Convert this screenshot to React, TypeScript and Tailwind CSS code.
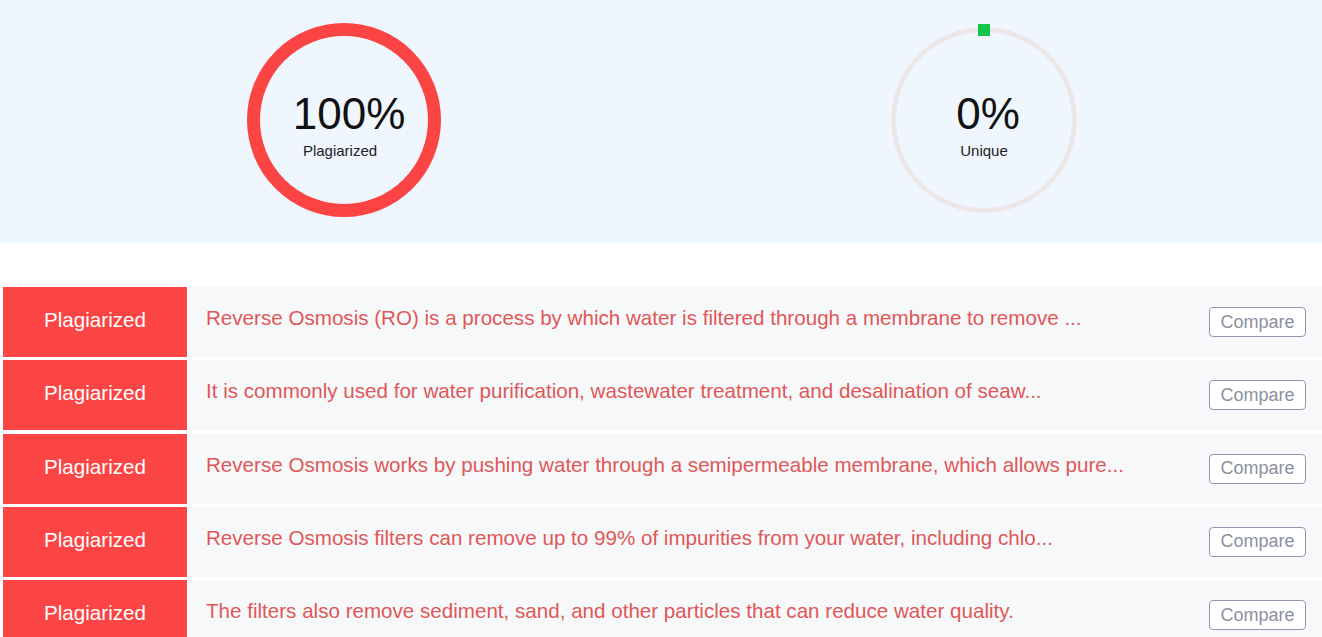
import React from "react";

const rows = [
  "Reverse Osmosis (RO) is a process by which water is filtered through a membrane to remove ...",
  "It is commonly used for water purification, wastewater treatment, and desalination of seaw...",
  "Reverse Osmosis works by pushing water through a semipermeable membrane, which allows pure...",
  "Reverse Osmosis filters can remove up to 99% of impurities from your water, including chlo...",
  "The filters also remove sediment, sand, and other particles that can reduce water quality.",
];

function Ring({ full, value, label }: { full: boolean; value: string; label: string }) {
  return (
    <div className="relative w-[200px] h-[200px]">
      <svg width="200" height="200" viewBox="0 0 200 200" className="absolute inset-0">
        {full ? (
          <circle cx="100" cy="100" r="90.5" fill="none" stroke="#fb4545" strokeWidth="13" />
        ) : (
          <>
            <circle cx="100" cy="100" r="90.5" fill="none" stroke="#ede6e6" strokeWidth="4.5" />
            <rect x="94" y="4" width="12" height="12" fill="#12c54b" />
          </>
        )}
      </svg>
      <div className="absolute inset-0 flex flex-col items-center justify-center pt-[10px]">
        <div className={full ? "text-[44px] leading-[46px] text-[#111] ml-[10px]" : "text-[44px] leading-[46px] text-[#111] ml-[8px]"}>{value}</div>
        <div className={full ? "text-[15px] leading-[18px] text-[#222] mt-[5px] mr-[8px]" : "text-[15px] leading-[18px] text-[#222] mt-[5px]"}>{label}</div>
      </div>
    </div>
  );
}

export default function App() {
  return (
    <div className="w-[1322px] h-[637px] overflow-hidden bg-white" style={{ fontFamily: '"Liberation Sans", Arial, sans-serif' }}>
      <div className="h-[243px] bg-[#eff6fe] grid grid-cols-2 pl-[24px] pr-[18px]">
        <div className="flex justify-center pt-[20px]">
          <Ring full value="100%" label="Plagiarized" />
        </div>
        <div className="flex justify-center pt-[20px]">
          <Ring full={false} value="0%" label="Unique" />
        </div>
      </div>
      <div className="flex flex-col gap-[3.25px] pt-[44px] pl-[3px]">
        {rows.map((t, i) => (
          <div key={i} className="flex h-[70px]">
            <div className="w-[184px] bg-[#fb4444] flex items-center justify-center text-white text-[20.6px] pb-[3px]">
              Plagiarized
            </div>
            <div className="flex-1 ml-[2px] bg-[#f7f8fa] flex items-center pl-[17px] pr-[16px]">
              <div className="flex-1 text-[#e05757] text-[20.6px] whitespace-nowrap overflow-hidden pb-[7px]">{t}</div>
              <button className="w-[97px] h-[30px] rounded-[4px] border border-[#9496b4] bg-white text-[#8b8fa2] text-[18px] flex items-center justify-center">
                Compare
              </button>
            </div>
          </div>
        ))}
      </div>
    </div>
  );
}
